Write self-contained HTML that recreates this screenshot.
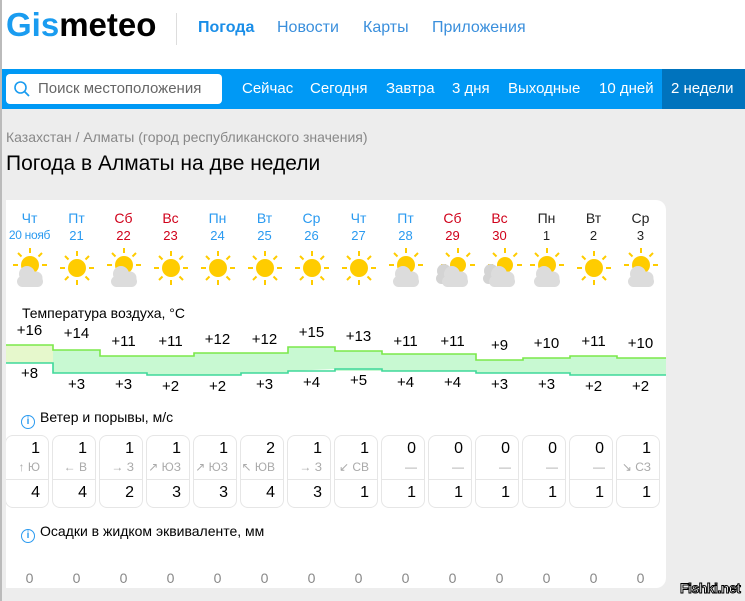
<!DOCTYPE html>
<html><head><meta charset="utf-8"><style>
*{margin:0;padding:0;box-sizing:border-box}
body{width:745px;height:601px;overflow:hidden;background:#ededed;font-family:"Liberation Sans",sans-serif;position:relative}
.a{position:absolute}
#hdr{left:0;top:0;width:745px;height:69px;background:#fff}
#bar{left:0;top:69px;width:745px;height:40px;background:#0099f5}
.nav{top:80px;color:#fff;font-size:15px}
#card{left:6px;top:200px;width:660px;height:388px;background:#fff;border-radius:0 10px 10px 0}
.c{position:absolute;width:47px;text-align:center}
.dn{font-size:14px;top:210px}
.dd{font-size:13px;top:228px}
.b{color:#2a9af0}.r{color:#d0021b}.k{color:#222}
.t{font-size:15px;color:#000}
.box{position:absolute;top:435px;width:44px;height:73px;border:1px solid #e6e6e6;border-radius:8px}
.box i{position:absolute;left:0;right:0;top:43px;border-top:1px solid #e6e6e6}
.w1,.w3{position:absolute;font-size:16px;color:#000;text-align:right;width:40px}
.w2{position:absolute;font-size:12px;color:#aaa;text-align:right;width:41px;white-space:nowrap}
.p{font-size:14px;color:#888;top:570px}
.h{font-size:14px;color:#000}
.inf{display:inline-block;width:14px;height:14px;border:1.5px solid #2a9af0;border-radius:50%;color:#2a9af0;font-size:10px;font-weight:bold;text-align:center;line-height:11px;vertical-align:-2px;margin-right:5px}
</style></head><body>
<div class="a" style="left:0;top:0;width:2px;height:601px;background:#bbb;z-index:5"></div>
<div id="hdr" class="a"></div>
<div class="a" style="left:6px;top:6px;font-size:33px;font-weight:bold;letter-spacing:0px"><span style="color:#1a9cf0">Gis</span><span style="color:#000">meteo</span></div>
<div class="a" style="left:176px;top:13px;width:1px;height:32px;background:#ddd"></div>
<div class="a" style="left:198px;top:19px;font-size:16px;color:#1a8ee8;font-weight:bold">Погода</div>
<div class="a" style="left:277px;top:19px;font-size:16px;color:#3a8fdc">Новости</div>
<div class="a" style="left:363px;top:19px;font-size:16px;color:#3a8fdc">Карты</div>
<div class="a" style="left:432px;top:19px;font-size:16px;color:#3a8fdc">Приложения</div>
<div id="bar" class="a"></div>
<div class="a" style="left:662px;top:69px;width:83px;height:40px;background:#0073bd"></div>
<div class="a" style="left:6px;top:74px;width:216px;height:30px;background:#fff;border-radius:4px"></div>
<svg class="a" style="left:13px;top:80px" width="18" height="18"><circle cx="7.5" cy="7.5" r="5.5" fill="none" stroke="#1a9cf0" stroke-width="1.6"/><line x1="11.5" y1="11.5" x2="16" y2="16" stroke="#1a9cf0" stroke-width="1.8"/></svg>
<div class="a" style="left:38px;top:80px;font-size:15px;color:#666">Поиск местоположения</div>
<div class="a nav" style="left:242px">Сейчас</div>
<div class="a nav" style="left:310px">Сегодня</div>
<div class="a nav" style="left:386px">Завтра</div>
<div class="a nav" style="left:452px">3 дня</div>
<div class="a nav" style="left:508px">Выходные</div>
<div class="a nav" style="left:599px">10 дней</div>
<div class="a nav" style="left:671px">2 недели</div>
<div class="a" style="left:6px;top:129px;font-size:14px;color:#888">Казахстан / Алматы (город республиканского значения)</div>
<div class="a" style="left:6px;top:152px;font-size:21px;color:#000">Погода в Алматы на две недели</div>
<div id="card" class="a"></div>

<svg class="a" style="left:0;top:0" width="745" height="601">
<defs>
<g id="rays" stroke="#ffcc00" stroke-width="2">
<line x1="0" y1="-12" x2="0" y2="-17"/><line x1="8.5" y1="-8.5" x2="12" y2="-12"/><line x1="12" y1="0" x2="17" y2="0"/><line x1="-12" y1="0" x2="-17" y2="0"/><line x1="-8.5" y1="-8.5" x2="-12" y2="-12"/>
</g>
<g id="sun"><circle r="9" fill="#ffcc00"/><use href="#rays"/>
<g stroke="#ffcc00" stroke-width="2"><line x1="0" y1="12" x2="0" y2="17"/><line x1="8.5" y1="8.5" x2="12" y2="12"/><line x1="-8.5" y1="8.5" x2="-12" y2="12"/></g></g>
<g id="cl" fill="#dcdcdc"><circle cx="-3" cy="0" r="8"/><circle cx="6" cy="4" r="6.5"/><rect x="-13" y="2" width="26" height="11" rx="5.5"/></g>
<g id="pc"><g transform="translate(0,-3)"><circle r="9" fill="#ffcc00"/><use href="#rays"/></g><use href="#cl" transform="translate(0,6)"/></g>
<g id="pc2"><g transform="translate(5,-3)"><circle r="8" fill="#ffcc00"/><use href="#rays"/></g><g fill="#d4d4d4"><circle cx="-9" cy="3" r="7"/><rect x="-17" y="5" width="16" height="11" rx="5.5"/></g><use href="#cl" transform="translate(2,6)"/></g>
</defs>
<use href="#pc" x="30" y="268"/><use href="#sun" x="77" y="268"/><use href="#pc" x="124" y="268"/><use href="#sun" x="171" y="268"/><use href="#sun" x="218" y="268"/><use href="#sun" x="265" y="268"/><use href="#sun" x="312" y="268"/><use href="#sun" x="359" y="268"/><use href="#pc" x="406" y="268"/><use href="#pc2" x="453" y="268"/><use href="#pc2" x="500" y="268"/><use href="#pc" x="547" y="268"/><use href="#sun" x="594" y="268"/><use href="#pc" x="641" y="268"/>
<rect x="6" y="345" width="47" height="18" fill="#e6f8cc"/>
<polygon fill="#c8f9d2" points="53,350 100,350 100,356 194,356 194,353 288,353 288,347 335,347 335,351 382,351 382,354 476,354 476,360 523,360 523,358 570,358 570,356 617,356 617,358 666,358 666,375 617,375 617,375 570,375 570,373 476,373 476,371 335,371 335,369 335,369 288,371 288,373 241,373 241,375 147,375 147,373 100,373 100,373 53,373"/>
<polyline fill="none" stroke="#7be84a" stroke-width="1.6" points="6,345 53,345 53,350 100,350 100,356 194,356 194,353 288,353 288,347 335,347 335,351 382,351 382,354 476,354 476,360 523,360 523,358 570,358 570,356 617,356 617,358 666,358"/>
<polyline fill="none" stroke="#3fd89a" stroke-width="1.6" points="6,363 53,363 53,373 147,373 147,375 241,375 241,373 288,373 288,371 335,371 335,369 382,369 382,371 476,371 476,373 570,373 570,375 666,375"/>
</svg>

<div class="c dn b" style="left:6px">Чт</div><div class="c dd b" style="left:6px;width:47px;font-size:12px;letter-spacing:-0.3px">20 нояб</div>
<div class="c dn b" style="left:53px">Пт</div><div class="c dd b" style="left:53px">21</div>
<div class="c dn r" style="left:100px">Сб</div><div class="c dd r" style="left:100px">22</div>
<div class="c dn r" style="left:147px">Вс</div><div class="c dd r" style="left:147px">23</div>
<div class="c dn b" style="left:194px">Пн</div><div class="c dd b" style="left:194px">24</div>
<div class="c dn b" style="left:241px">Вт</div><div class="c dd b" style="left:241px">25</div>
<div class="c dn b" style="left:288px">Ср</div><div class="c dd b" style="left:288px">26</div>
<div class="c dn b" style="left:335px">Чт</div><div class="c dd b" style="left:335px">27</div>
<div class="c dn b" style="left:382px">Пт</div><div class="c dd b" style="left:382px">28</div>
<div class="c dn r" style="left:429px">Сб</div><div class="c dd r" style="left:429px">29</div>
<div class="c dn r" style="left:476px">Вс</div><div class="c dd r" style="left:476px">30</div>
<div class="c dn k" style="left:523px">Пн</div><div class="c dd k" style="left:523px">1</div>
<div class="c dn k" style="left:570px">Вт</div><div class="c dd k" style="left:570px">2</div>
<div class="c dn k" style="left:617px">Ср</div><div class="c dd k" style="left:617px">3</div>

<div class="a h" style="left:22px;top:305px">Температура воздуха, °C</div>
<div class="c t" style="left:6px;top:322px">+16</div><div class="c t" style="left:6px;top:365px">+8</div>
<div class="c t" style="left:53px;top:325px">+14</div><div class="c t" style="left:53px;top:376px">+3</div>
<div class="c t" style="left:100px;top:333px">+11</div><div class="c t" style="left:100px;top:376px">+3</div>
<div class="c t" style="left:147px;top:333px">+11</div><div class="c t" style="left:147px;top:378px">+2</div>
<div class="c t" style="left:194px;top:331px">+12</div><div class="c t" style="left:194px;top:378px">+2</div>
<div class="c t" style="left:241px;top:331px">+12</div><div class="c t" style="left:241px;top:376px">+3</div>
<div class="c t" style="left:288px;top:324px">+15</div><div class="c t" style="left:288px;top:374px">+4</div>
<div class="c t" style="left:335px;top:328px">+13</div><div class="c t" style="left:335px;top:372px">+5</div>
<div class="c t" style="left:382px;top:333px">+11</div><div class="c t" style="left:382px;top:374px">+4</div>
<div class="c t" style="left:429px;top:333px">+11</div><div class="c t" style="left:429px;top:374px">+4</div>
<div class="c t" style="left:476px;top:337px">+9</div><div class="c t" style="left:476px;top:376px">+3</div>
<div class="c t" style="left:523px;top:335px">+10</div><div class="c t" style="left:523px;top:376px">+3</div>
<div class="c t" style="left:570px;top:333px">+11</div><div class="c t" style="left:570px;top:378px">+2</div>
<div class="c t" style="left:617px;top:335px">+10</div><div class="c t" style="left:617px;top:378px">+2</div>

<div class="a h" style="left:21px;top:409px"><span class="inf">i</span>Ветер и порывы, м/с</div>
<div class="a h" style="left:21px;top:523px"><span class="inf">i</span>Осадки в жидком эквиваленте, мм</div>

<div style="position:absolute;left:0;top:0;width:745px;height:601px;overflow:hidden;clip-path:inset(0 0 0 6px)">
<div class="box" style="left:5px"><i></i></div><div class="box" style="left:52px"><i></i></div><div class="box" style="left:99px"><i></i></div><div class="box" style="left:146px"><i></i></div><div class="box" style="left:193px"><i></i></div><div class="box" style="left:240px"><i></i></div><div class="box" style="left:287px"><i></i></div><div class="box" style="left:334px"><i></i></div><div class="box" style="left:381px"><i></i></div><div class="box" style="left:428px"><i></i></div><div class="box" style="left:475px"><i></i></div><div class="box" style="left:522px"><i></i></div><div class="box" style="left:569px"><i></i></div><div class="box" style="left:616px"><i></i></div>
</div>
<div style="position:absolute;left:0;top:440px">
<div class="w1" style="left:0">1</div><div class="w1" style="left:47px">1</div><div class="w1" style="left:94px">1</div><div class="w1" style="left:141px">1</div><div class="w1" style="left:188px">1</div><div class="w1" style="left:235px">2</div><div class="w1" style="left:282px">1</div><div class="w1" style="left:329px">1</div><div class="w1" style="left:376px">0</div><div class="w1" style="left:423px">0</div><div class="w1" style="left:470px">0</div><div class="w1" style="left:517px">0</div><div class="w1" style="left:564px">0</div><div class="w1" style="left:611px">1</div>
</div>
<div style="position:absolute;left:0;top:460px">
<div class="w2" style="left:-1px">↑ Ю</div><div class="w2" style="left:46px">← В</div><div class="w2" style="left:93px">→ З</div><div class="w2" style="left:140px">↗ ЮЗ</div><div class="w2" style="left:187px">↗ ЮЗ</div><div class="w2" style="left:234px">↖ ЮВ</div><div class="w2" style="left:281px">→ З</div><div class="w2" style="left:328px">↙ СВ</div><div class="w2" style="left:376px">—</div><div class="w2" style="left:423px">—</div><div class="w2" style="left:470px">—</div><div class="w2" style="left:517px">—</div><div class="w2" style="left:564px">—</div><div class="w2" style="left:610px">↘ СЗ</div>
</div>
<div style="position:absolute;left:0;top:484px">
<div class="w3" style="left:0">4</div><div class="w3" style="left:47px">4</div><div class="w3" style="left:94px">2</div><div class="w3" style="left:141px">3</div><div class="w3" style="left:188px">3</div><div class="w3" style="left:235px">4</div><div class="w3" style="left:282px">3</div><div class="w3" style="left:329px">1</div><div class="w3" style="left:376px">1</div><div class="w3" style="left:423px">1</div><div class="w3" style="left:470px">1</div><div class="w3" style="left:517px">1</div><div class="w3" style="left:564px">1</div><div class="w3" style="left:611px">1</div>
</div>

<div class="c p" style="left:6px">0</div><div class="c p" style="left:53px">0</div><div class="c p" style="left:100px">0</div><div class="c p" style="left:147px">0</div><div class="c p" style="left:194px">0</div><div class="c p" style="left:241px">0</div><div class="c p" style="left:288px">0</div><div class="c p" style="left:335px">0</div><div class="c p" style="left:382px">0</div><div class="c p" style="left:429px">0</div><div class="c p" style="left:476px">0</div><div class="c p" style="left:523px">0</div><div class="c p" style="left:570px">0</div><div class="c p" style="left:617px">0</div>

<div class="a" style="left:680px;top:580px;font-size:14px;font-weight:bold;color:#fff;-webkit-text-stroke:1px #000;letter-spacing:-0.5px">Fishki.net</div>
</body></html>
